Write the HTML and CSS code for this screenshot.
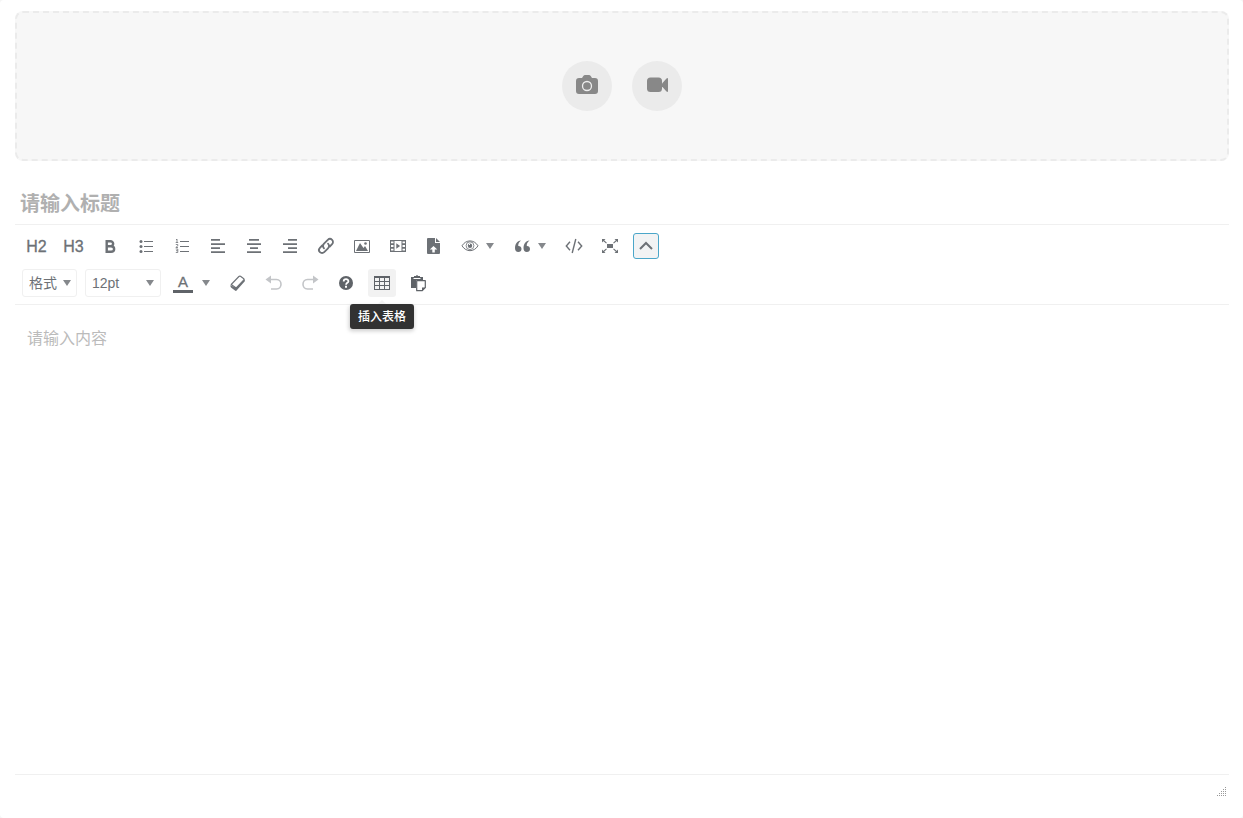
FILE: index.html
```html
<!DOCTYPE html>
<html lang="zh-CN">
<head>
<meta charset="utf-8">
<meta name="viewport" content="width=device-width, initial-scale=1">
<title>编辑器</title>
<link rel="stylesheet" href="styles.css">
</head>
<body>
<main class="editor">
  <section class="upload">
    <button class="upload-btn" type="button" aria-label="上传图片">
      <svg width="22" height="20" viewBox="0 0 22 20"><path fill="#888" d="M6 3 7.300 1Q8 0 9 0h4q1 0 1.700 1L16 3h3q3 0 3 3v10q0 3-3 3H3q-3 0-3-3V6q0-3 3-3z"/><circle cx="11" cy="11" r="4.500" fill="none" stroke="#eee" stroke-width="1.300"/></svg>
    </button>
    <button class="upload-btn" type="button" aria-label="上传视频">
      <svg width="22" height="20" viewBox="0 0 22 20"><rect x="1" y="2.500" width="15" height="14.500" rx="3.500" fill="#888"/><path fill="#888" d="M16 8.500 20.500 3.500q1.500-1 1.500.5v12q0 1.500-1.500.5L16 11.500z"/></svg>
    </button>
  </section>

  <input class="title" type="text" placeholder="请输入标题" aria-label="标题">

  <div class="toolbar" role="toolbar">
    <div class="row">
      <button class="tool heading" type="button">H2</button>
      <button class="tool heading" type="button">H3</button>
      <button class="tool" type="button" aria-label="粗体"><svg width="20" height="20" viewBox="0 0 20 20"><path fill="none" stroke="#6d7176" stroke-width="2.400" d="M6.700 5.200h3.600c3.800 0 3.800 5 0 5H6.700zm0 5h4.300c4.200 0 4.200 5.600 0 5.600H6.700z"/></svg></button>
      <button class="tool" type="button" aria-label="项目符号列表"><svg width="20" height="20" viewBox="0 0 20 20"><g fill="#6d7176"><circle cx="5" cy="5.500" r="1.500"/><circle cx="5" cy="10.500" r="1.500"/><circle cx="5" cy="15.500" r="1.500"/></g><path stroke="#6d7176" d="M8 5.500h9M8 10.500h9M8 15.500h9"/></svg></button>
      <button class="tool" type="button" aria-label="编号列表"><svg width="20" height="20" viewBox="0 0 20 20"><path fill="none" stroke="#6d7176" stroke-width=".8" d="M4 4l1-1v3.500M3.700 6.500h2.500M3.800 8.500h2v1.300l-2 1.700H6M3.800 13h2v3.500h-2M4 14.700h1.800"/><path stroke="#6d7176" d="M8 5.500h9M8 10.500h9M8 15.500h9"/></svg></button>
      <button class="tool" type="button" aria-label="左对齐"><svg width="20" height="20" viewBox="0 0 20 20"><path fill="#6d7176" d="M3 3h9v1.700H3zM3 7.200h14v1.700H3zM3 11.200h9v1.700H3zM3 15.300h14V17H3z"/></svg></button>
      <button class="tool" type="button" aria-label="居中"><svg width="20" height="20" viewBox="0 0 20 20"><path fill="#6d7176" d="M5 3h10v1.700H5zM3 7.200h14v1.700H3zM6 11.200h8v1.700H6zM3 15.300h14V17H3z"/></svg></button>
      <button class="tool" type="button" aria-label="右对齐"><svg width="20" height="20" viewBox="0 0 20 20"><path fill="#6d7176" d="M8 3h9v1.700H8zM3 7.200h14v1.700H3zM8 11.200h9v1.700H8zM3 15.300h14V17H3z"/></svg></button>
      <button class="tool" type="button" aria-label="链接"><svg width="20" height="20" viewBox="0 0 20 20"><path fill="none" stroke="#6d7176" stroke-width="1.800" stroke-linecap="round" d="M8 12.300c-1.500-1.500-1.300-3.300 0-4.600l3.800-3.800c1.200-1.200 3.100-1.200 4.300 0s1.200 3.100 0 4.300l-2.300 2.300M12 7.700c1.500 1.500 1.300 3.300 0 4.600l-3.800 3.800c-1.200 1.200-3.100 1.200-4.300 0s-1.200-3.100 0-4.300l2.300-2.300"/></svg></button>
      <button class="tool" type="button" aria-label="图片"><svg width="20" height="20" viewBox="0 0 20 20"><path fill="none" stroke="#6d7176" d="M2.500 4.500h15v12h-15z"/><path fill="#6d7176" d="m4 15 4-8 3.500 5 1.500-2 3 5z"/><circle cx="13.500" cy="7.500" r="1.300" fill="#6d7176"/></svg></button>
      <button class="tool" type="button" aria-label="视频"><svg width="20" height="20" viewBox="0 0 20 20"><path fill="#6d7176" fill-rule="evenodd" d="M2 4h16v12H2zm4.500 1v10h7V5zM3 5.500v1.700h2.500V5.500zm0 3.600v1.800h2.500V9.100zm0 3.700v1.700h2.500v-1.700zm11.500-7.300v1.700H17V5.500zm0 3.600v1.800H17V9.100zm0 3.700v1.700H17v-1.700zM8.300 7.300l3.800 2.700-3.800 2.700z"/></svg></button>
      <button class="tool" type="button" aria-label="上传文件"><svg width="20" height="20" viewBox="0 0 20 20"><path fill="#6d7176" fill-rule="evenodd" d="M4 2h7v5h5v10q0 1-1 1H4q-1 0-1-1V3q0-1 1-1zm5.500 8L5.800 13.500h2.500v3h2.500v-3h2.500z"/><path fill="#6d7176" d="M12 2l4 4h-4z"/></svg></button>
      <button class="tool split" type="button" aria-label="预览"><svg width="20" height="20" viewBox="0 0 20 20"><path fill="none" stroke="#6d7176" d="M2 9.800C6 3.300 14 3.300 18 9.800c-4 6.500-12 6.500-16 0z"/><circle cx="10" cy="9.700" r="3.900" fill="none" stroke="#6d7176" stroke-width=".8"/><circle cx="10" cy="9.700" r="2.200" fill="#6d7176"/><path stroke="#fff" d="M9 8.500h1"/></svg><svg class="caret" width="8" height="6" viewBox="0 0 8 6"><path d="M0 0h8L4 6z"/></svg></button>
      <button class="tool split" type="button" aria-label="引用"><svg width="20" height="20" viewBox="0 0 20 20"><path fill="#6d7176" d="M9 4.500C5 5 3 8 3 12c0 2.500 1.200 4 3.300 4 1.900 0 3.200-1.300 3.200-3.100S8.200 9.900 6.300 10C6 8 7 6 9 4.500zM17.500 4.500c-4 .5-6 3.500-6 7.500 0 2.500 1.200 4 3.300 4 1.900 0 3.200-1.300 3.200-3.100s-1.300-3-3.200-2.900c-.3-2 .7-4 2.700-5.500z"/></svg><svg class="caret" width="8" height="6" viewBox="0 0 8 6"><path d="M0 0h8L4 6z"/></svg></button>
      <button class="tool" type="button" aria-label="源代码"><svg width="20" height="20" viewBox="0 0 20 20"><path fill="none" stroke="#6d7176" stroke-width="1.400" d="M6 5.800 2.300 10 6 14.200M14 5.800l3.700 4.200-3.700 4.200M11.800 3 8.200 17"/></svg></button>
      <button class="tool" type="button" aria-label="全屏"><svg width="20" height="20" viewBox="0 0 20 20"><path fill="#6d7176" d="M7 8h6v4H7zM2 3h3.500L2 6.500zM18 3v3.500L14.500 3zM2 17v-3.500L5.500 17zM18 17h-3.500l3.500-3.500z"/><path stroke="#6d7176" stroke-width="1.100" d="m3 4 3.500 3.200M17 4l-3.500 3.200M3 16l3.500-3.200M17 16l-3.500-3.200"/></svg></button>
      <button class="tool toggle" type="button" aria-label="收起工具栏" aria-expanded="true"><svg width="20" height="20" viewBox="0 0 20 20"><path fill="none" stroke="#6d7176" stroke-width="2" d="m4 13 6-6 6 6"/></svg></button>
    </div>
    <div class="row">
      <label class="picker format">
        <select aria-label="格式"><option>格式</option></select>
        <svg class="caret" width="8" height="6" viewBox="0 0 8 6"><path d="M0 0h8L4 6z"/></svg>
      </label>
      <label class="picker size">
        <select aria-label="字号"><option>12pt</option></select>
        <svg class="caret" width="8" height="6" viewBox="0 0 8 6"><path d="M0 0h8L4 6z"/></svg>
      </label>
      <button class="tool split color" type="button" aria-label="文字颜色"><span class="color-letter">A</span><svg class="caret" width="8" height="6" viewBox="0 0 8 6"><path d="M0 0h8L4 6z"/></svg></button>
      <button class="tool" type="button" aria-label="清除格式"><svg width="20" height="20" viewBox="0 0 20 20"><path fill="#6d7176" d="m2.500 12 2.500 1.500 3 1L16 5l1 3-8 9q-1 1.500-2 .5L3 14.500q-.8-1-.5-2.500z"/><path fill="#fff" stroke="#6d7176" stroke-width="1.100" stroke-linejoin="round" d="m3.200 11.500 7.700-8q.7-.7 1.600-.2l3 2.200q.9.800.1 1.700L8.200 15z"/></svg></button>
      <button class="tool" type="button" aria-label="撤销"><svg width="20" height="20" viewBox="0 0 20 20"><path fill="#c3c5c8" d="M1.500 6.500 7 2.500v8z"/><path fill="none" stroke="#c3c5c8" stroke-width="1.600" d="M6 6.500h6.500c6 0 6 9.500 0 9.500H7"/></svg></button>
      <button class="tool" type="button" aria-label="重做"><svg width="20" height="20" viewBox="0 0 20 20"><path fill="#c3c5c8" d="M18.500 6.500 13 2.500v8z"/><path fill="none" stroke="#c3c5c8" stroke-width="1.600" d="M14 6.500H7.500c-6 0-6 9.500 0 9.500H13"/></svg></button>
      <button class="tool" type="button" aria-label="帮助"><svg width="20" height="20" viewBox="0 0 20 20"><circle cx="10" cy="10" r="7" fill="#5f6368"/><path fill="none" stroke="#fff" stroke-width="1.800" d="M7.700 8.500c0-3 4.700-3 4.700-.3 0 1.700-2.300 1.600-2.300 3.500"/><path fill="#fff" d="M9 12.700h2v2H9z"/></svg></button>
      <button class="tool active" type="button" aria-label="插入表格" aria-describedby="table-tip"><svg width="20" height="20" viewBox="0 0 20 20"><path fill="#5f6368" fill-rule="evenodd" d="M2 3h16v14H2zm1 2v3h4V5zm5 0v3h4V5zm5 0v3h4V5zM3 9v3h4V9zm5 0v3h4V9zm5 0v3h4V9zM3 13v3h4v-3zm5 0v3h4v-3zm5 0v3h4v-3z"/></svg><span class="tooltip" id="table-tip" role="tooltip">插入表格</span></button>
      <button class="tool" type="button" aria-label="粘贴"><svg width="20" height="20" viewBox="0 0 20 20"><path fill="#5f6368" d="M3 4h3V3h2q1-2 2 0h2v1h3v3H9q-1 0-1 1v7H3z"/><path stroke="#fff" d="M5.500 5.500h7"/><path fill="#fff" stroke="#5f6368" stroke-width="1.200" stroke-linejoin="round" d="M8.700 7.700h8.600v7l-3 3H8.700z"/><path fill="#5f6368" d="M14 14.500h3.500L14 18z"/></svg></button>
    </div>
  </div>

  <textarea class="content" placeholder="请输入内容" aria-label="内容"></textarea>

  <footer class="status">
    <svg width="10" height="10" viewBox="0 0 10 10"><path fill="#999" d="M9 0h1v1H9zM7 2h1v1H7zM9 2h1v1H9zM5 4h1v1H5zM7 4h1v1H7zM9 4h1v1H9zM3 6h1v1H3zM5 6h1v1H5zM7 6h1v1H7zM9 6h1v1H9zM1 8h1v1H1zM3 8h1v1H3zM5 8h1v1H5zM7 8h1v1H7zM9 8h1v1H9z"/></svg>
  </footer>
</main>
</body>
</html>
```
FILE: styles.css
```css
* {
  box-sizing: border-box;
}

body {
  margin: 0;
  background: #f5f5f5;
  font-family: "Liberation Sans", "Noto Sans CJK SC", sans-serif;
  color: #6d7176;
}

button,
input,
select,
textarea {
  margin: 0;
  padding: 0;
  border: 0;
  background: transparent;
  color: inherit;
  font: inherit;
  outline: none;
}

svg {
  display: block;
  flex: none;
}

.editor {
  display: flex;
  flex-direction: column;
  min-height: 100vh;
  padding: 11px 14px 0 15px;
  border-radius: 4px;
  background: #fff;
}

.upload {
  display: flex;
  align-items: center;
  justify-content: center;
  gap: 20px;
  height: 150px;
  border: 2px dashed #ebebeb;
  border-radius: 8px;
  background: #f7f7f7;
}

.upload-btn {
  display: flex;
  align-items: center;
  justify-content: center;
  width: 50px;
  height: 50px;
  padding-bottom: 2px;
  border-radius: 50%;
  background: #ebebeb;
}

.title {
  height: 40px;
  margin-top: 24px;
  padding: 0 5px;
  border-bottom: 1px solid #f0f0f0;
  font-size: 20px;
  font-weight: 700;
}

.title::placeholder {
  color: #b0b0b0;
}

.toolbar {
  display: flex;
  flex-direction: column;
  gap: 9px;
  padding: 7px;
  border-bottom: 1px solid #f0f0f0;
}

.row {
  display: flex;
  flex-wrap: wrap;
  gap: 8px;
}

.tool {
  display: flex;
  align-items: center;
  justify-content: center;
  position: relative;
  width: 28px;
  height: 28px;
  border-radius: 3px;
}

.heading {
  width: 29px;
  padding-top: 2px;
  font-size: 16px;
  -webkit-text-stroke: 0.3px #6d7176;
}

.split {
  justify-content: flex-start;
  gap: 6px;
  width: 44px;
  padding-left: 4px;
}

.caret {
  fill: #85888c;
}

.toggle {
  width: 26px;
  height: 26px;
  margin: 1px;
  border: 1px solid #4ba6c9;
  background: #f2f3f4;
}

.picker {
  display: flex;
  align-items: center;
  position: relative;
  height: 28px;
  border: 1px solid #f0f0f0;
  border-radius: 3px;
  font-size: 14px;
}

.format {
  width: 55px;
}

.size {
  width: 76px;
}

.picker select {
  width: 100%;
  height: 100%;
  padding-left: 6px;
  appearance: none;
}

.picker .caret {
  position: absolute;
  right: 6px;
  pointer-events: none;
}

.format .caret {
  right: 5px;
}

.color {
  gap: 9px;
  width: 47px;
}

.color-letter {
  width: 20px;
  height: 20px;
  border-bottom: 3px solid #5f6368;
  font-size: 15px;
  line-height: 18px;
  -webkit-text-stroke: 0.3px #6d7176;
}

.active {
  background: #f2f2f2;
}

.tooltip {
  position: absolute;
  top: 35px;
  left: 50%;
  transform: translateX(-50%);
  padding: 5px 8px 3px;
  border-radius: 3px;
  background: #323232;
  box-shadow: 0 2px 4px rgba(0, 0, 0, 0.2);
  color: #fff;
  font-size: 12px;
  font-weight: 500;
  line-height: 17px;
  white-space: nowrap;
}

.tooltip::before {
  content: "";
  position: absolute;
  bottom: 100%;
  left: 50%;
  margin-left: -4px;
  border: 4px solid transparent;
  border-top: 0;
  border-bottom-color: #f2f2f2;
}

.content {
  flex: 1;
  padding: 22px 12px;
  font-size: 16px;
  line-height: 24px;
  resize: none;
}

.content::placeholder {
  color: #bbb;
}

.status {
  display: flex;
  justify-content: flex-end;
  height: 44px;
  padding: 12px 3px;
  border-top: 1px solid #f0f0f0;
}
```
